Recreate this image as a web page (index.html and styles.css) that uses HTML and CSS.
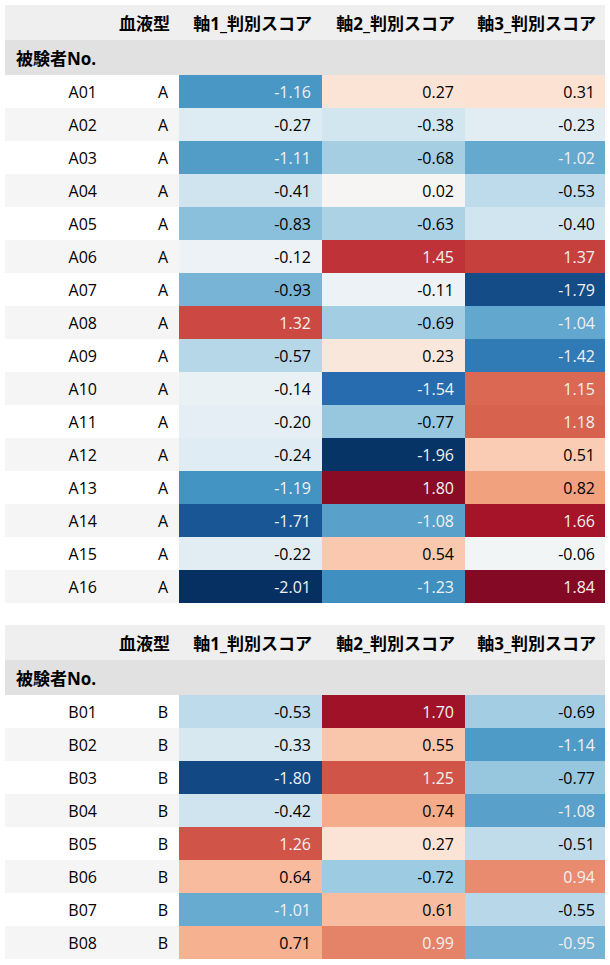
FILE: index.html
```html
<!DOCTYPE html>
<html lang="ja">
<head>
<meta charset="utf-8">
<link rel="stylesheet" href="styles.css">
</head>
<body>
<table class="score-table">
  <colgroup><col class="c-idx"><col class="c-blood"><col class="c-ax1"><col class="c-ax2"><col class="c-ax3"></colgroup>
  <thead>
    <tr class="head-cols"><th></th><th>血液型</th><th>軸1_判別スコア</th><th>軸2_判別スコア</th><th>軸3_判別スコア</th></tr>
    <tr class="head-index"><th class="idx-name">被験者No.</th><th></th><th></th><th></th><th></th></tr>
  </thead>
  <tbody>
    <tr><th class="idx">A01</th><td class="blood">A</td><td class="score">-1.16</td><td class="score">0.27</td><td class="score">0.31</td></tr>
    <tr><th class="idx">A02</th><td class="blood">A</td><td class="score">-0.27</td><td class="score">-0.38</td><td class="score">-0.23</td></tr>
    <tr><th class="idx">A03</th><td class="blood">A</td><td class="score">-1.11</td><td class="score">-0.68</td><td class="score">-1.02</td></tr>
    <tr><th class="idx">A04</th><td class="blood">A</td><td class="score">-0.41</td><td class="score">0.02</td><td class="score">-0.53</td></tr>
    <tr><th class="idx">A05</th><td class="blood">A</td><td class="score">-0.83</td><td class="score">-0.63</td><td class="score">-0.40</td></tr>
    <tr><th class="idx">A06</th><td class="blood">A</td><td class="score">-0.12</td><td class="score">1.45</td><td class="score">1.37</td></tr>
    <tr><th class="idx">A07</th><td class="blood">A</td><td class="score">-0.93</td><td class="score">-0.11</td><td class="score">-1.79</td></tr>
    <tr><th class="idx">A08</th><td class="blood">A</td><td class="score">1.32</td><td class="score">-0.69</td><td class="score">-1.04</td></tr>
    <tr><th class="idx">A09</th><td class="blood">A</td><td class="score">-0.57</td><td class="score">0.23</td><td class="score">-1.42</td></tr>
    <tr><th class="idx">A10</th><td class="blood">A</td><td class="score">-0.14</td><td class="score">-1.54</td><td class="score">1.15</td></tr>
    <tr><th class="idx">A11</th><td class="blood">A</td><td class="score">-0.20</td><td class="score">-0.77</td><td class="score">1.18</td></tr>
    <tr><th class="idx">A12</th><td class="blood">A</td><td class="score">-0.24</td><td class="score">-1.96</td><td class="score">0.51</td></tr>
    <tr><th class="idx">A13</th><td class="blood">A</td><td class="score">-1.19</td><td class="score">1.80</td><td class="score">0.82</td></tr>
    <tr><th class="idx">A14</th><td class="blood">A</td><td class="score">-1.71</td><td class="score">-1.08</td><td class="score">1.66</td></tr>
    <tr><th class="idx">A15</th><td class="blood">A</td><td class="score">-0.22</td><td class="score">0.54</td><td class="score">-0.06</td></tr>
    <tr><th class="idx">A16</th><td class="blood">A</td><td class="score">-2.01</td><td class="score">-1.23</td><td class="score">1.84</td></tr>
  </tbody>
</table>

<table class="score-table">
  <colgroup><col class="c-idx"><col class="c-blood"><col class="c-ax1"><col class="c-ax2"><col class="c-ax3"></colgroup>
  <thead>
    <tr class="head-cols"><th></th><th>血液型</th><th>軸1_判別スコア</th><th>軸2_判別スコア</th><th>軸3_判別スコア</th></tr>
    <tr class="head-index"><th class="idx-name">被験者No.</th><th></th><th></th><th></th><th></th></tr>
  </thead>
  <tbody>
    <tr><th class="idx">B01</th><td class="blood">B</td><td class="score">-0.53</td><td class="score">1.70</td><td class="score">-0.69</td></tr>
    <tr><th class="idx">B02</th><td class="blood">B</td><td class="score">-0.33</td><td class="score">0.55</td><td class="score">-1.14</td></tr>
    <tr><th class="idx">B03</th><td class="blood">B</td><td class="score">-1.80</td><td class="score">1.25</td><td class="score">-0.77</td></tr>
    <tr><th class="idx">B04</th><td class="blood">B</td><td class="score">-0.42</td><td class="score">0.74</td><td class="score">-1.08</td></tr>
    <tr><th class="idx">B05</th><td class="blood">B</td><td class="score">1.26</td><td class="score">0.27</td><td class="score">-0.51</td></tr>
    <tr><th class="idx">B06</th><td class="blood">B</td><td class="score">0.64</td><td class="score">-0.72</td><td class="score">0.94</td></tr>
    <tr><th class="idx">B07</th><td class="blood">B</td><td class="score">-1.01</td><td class="score">0.61</td><td class="score">-0.55</td></tr>
    <tr><th class="idx">B08</th><td class="blood">B</td><td class="score">0.71</td><td class="score">0.99</td><td class="score">-0.95</td></tr>
  </tbody>
</table>
<script src="script.js"></script>
</body>
</html>
```

FILE: styles.css
```css
body {
  margin: 5px;
  background: #ffffff;
  font-family: "Open Sans", "Noto Sans CJK JP", sans-serif;
  font-size: 16px;
  color: #000000;
}

.score-table {
  border-collapse: collapse;
  border-spacing: 0;
  table-layout: fixed;
  width: 601px;
  margin-bottom: 22px;
}

.c-idx { width: 103px; }
.c-blood { width: 71px; }
.c-ax1 { width: 143px; }
.c-ax2 { width: 143px; }
.c-ax3 { width: 141px; }

.score-table th,
.score-table td {
  padding: 0 11px 0 11px;
  white-space: nowrap;
  text-align: right;
}

.head-cols th {
  height: 35px;
  background: #efefef;
  font-size: 17px;
  font-weight: 700;
  padding-right: 10px;
}

.head-index th {
  height: 35px;
  background: #e1e1e1;
  font-size: 17px;
  font-weight: 700;
}

.head-index .idx-name {
  text-align: left;
}

.score-table tbody tr {
  height: 33px;
}

.score-table tbody tr:nth-child(even) {
  background: #f5f5f5;
}

.idx {
  font-weight: 400;
}

.score {
  color: #000000;
}

.score.dark {
  color: #f1f1f1;
}
```

FILE: script.js
```js
(function () {
  var stops = ["#053061", "#2166ac", "#4393c3", "#92c5de", "#d1e5f0", "#f7f7f7",
               "#fddbc7", "#f4a582", "#d6604d", "#b2182b", "#67001f"];
  function hex(h) {
    return [parseInt(h.substr(1, 2), 16), parseInt(h.substr(3, 2), 16), parseInt(h.substr(5, 2), 16)];
  }
  var rgbStops = stops.map(hex);
  function cmap(x) {
    var N = 256;
    var i = Math.floor(x * N);
    if (i < 0) i = 0;
    if (i > N - 1) i = N - 1;
    var t = i / (N - 1) * 10;
    var k = Math.floor(t);
    if (k >= 10) k = 9;
    var f = t - k;
    var a = rgbStops[k], b = rgbStops[k + 1];
    return [0, 1, 2].map(function (j) { return a[j] + (b[j] - a[j]) * f; });
  }
  function lin(c) {
    c = c / 255;
    return c <= 0.04045 ? c / 12.92 : Math.pow((c + 0.055) / 1.055, 2.4);
  }
  var vmin = -2, vmax = 2;
  document.querySelectorAll(".score").forEach(function (td) {
    var v = parseFloat(td.textContent);
    var x = (v - vmin) / (vmax - vmin);
    var c = cmap(x);
    td.style.backgroundColor = "rgb(" + c.map(Math.round).join(",") + ")";
    var L = 0.2126 * lin(c[0]) + 0.7152 * lin(c[1]) + 0.0722 * lin(c[2]);
    if (L < 0.408) td.classList.add("dark");
  });
})();
```
